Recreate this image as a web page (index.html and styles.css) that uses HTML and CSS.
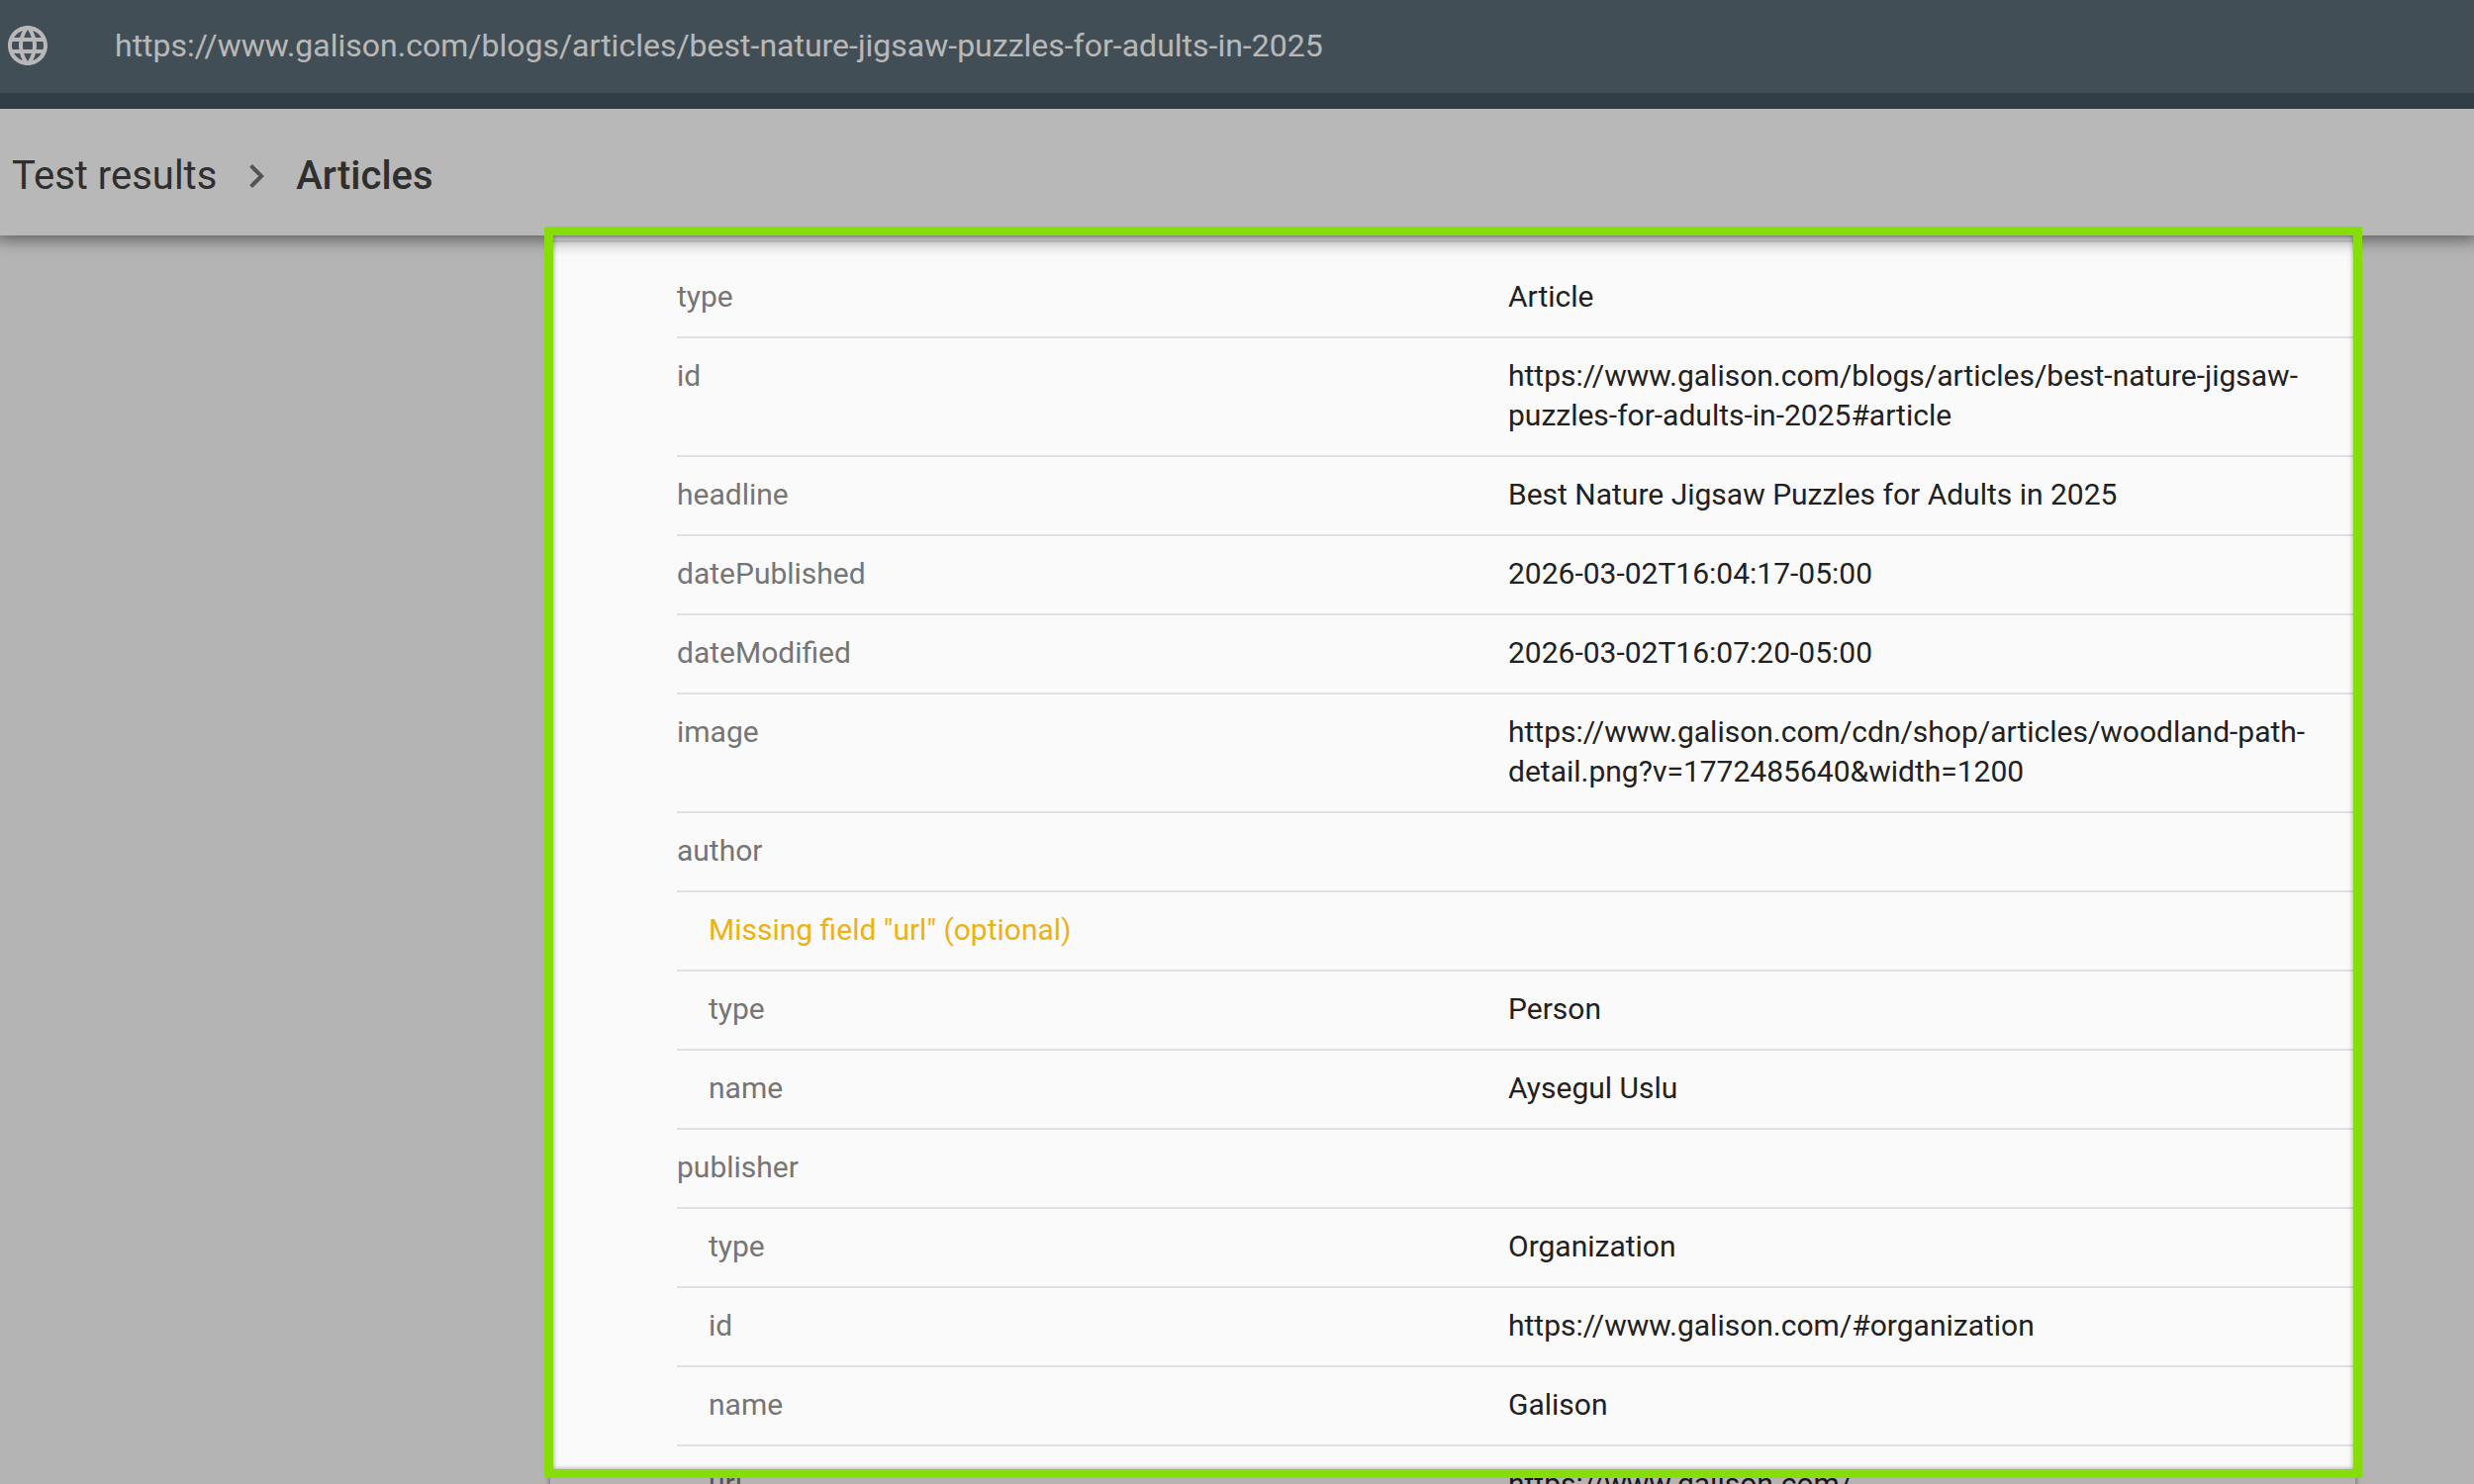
FILE: index.html
```html
<!DOCTYPE html>
<html lang="en">
<head>
  <meta charset="UTF-8" />
  <meta name="viewport" content="width=device-width, initial-scale=1.0" />
  <title>Test results - Articles</title>
  <link rel="stylesheet" href="styles.css">
</head>
<body>
  <header class="topbar">
    <form class="url-form">
      <svg class="icon" viewBox="0 0 24 24" aria-hidden="true"><path d="M11.99 2C6.47 2 2 6.48 2 12s4.47 10 9.99 10C17.52 22 22 17.52 22 12S17.52 2 11.99 2zm6.93 6h-2.95c-.32-1.25-.78-2.45-1.38-3.56 1.84.63 3.37 1.91 4.33 3.56zM12 4.04c.83 1.2 1.48 2.53 1.91 3.96h-3.82c.43-1.43 1.08-2.76 1.91-3.96zM4.26 14C4.1 13.36 4 12.69 4 12s.1-1.36.26-2h3.38c-.08.66-.14 1.32-.14 2s.06 1.34.14 2H4.26zm.82 2h2.95c.32 1.25.78 2.45 1.38 3.56-1.84-.63-3.37-1.9-4.33-3.56zm2.95-8H5.08c.96-1.66 2.49-2.93 4.33-3.56C8.81 5.55 8.35 6.75 8.03 8zM12 19.96c-.83-1.2-1.48-2.53-1.91-3.96h3.82c-.43 1.43-1.08 2.76-1.91 3.96zM14.34 14H9.66c-.09-.66-.16-1.32-.16-2s.07-1.35.16-2h4.68c.09.65.16 1.32.16 2s-.07 1.34-.16 2zm.25 5.56c.6-1.11 1.06-2.31 1.38-3.56h2.95c-.96 1.65-2.49 2.93-4.33 3.56zM16.36 14c.08-.66.14-1.32.14-2s-.06-1.34-.14-2h3.38c.16.64.26 1.31.26 2s-.1 1.36-.26 2h-3.38z"/></svg>
      <input class="url-input" type="text" aria-label="URL" value="https://www.galison.com/blogs/articles/best-nature-jigsaw-puzzles-for-adults-in-2025">
    </form>
  </header>

  <nav class="breadcrumb">
    <a href="#results">Test results</a>
    <svg class="icon chevron" viewBox="0 0 24 24" aria-hidden="true"><path d="M10 6L8.59 7.41 13.17 12l-4.58 4.59L10 18l6-6z"/></svg>
    <strong>Articles</strong>
  </nav>

  <main id="results">
    <div class="card">
      <div class="card-body">
        <table class="fields">
          <tr><th>type</th><td>Article</td></tr>
          <tr><th>id</th><td>https://www.galison.com/blogs/articles/best-nature-jigsaw-<wbr>puzzles-for-adults-in-2025#article</td></tr>
          <tr><th>headline</th><td>Best Nature Jigsaw Puzzles for Adults in 2025</td></tr>
          <tr><th>datePublished</th><td>2026-03-02T16:04:17-05:00</td></tr>
          <tr><th>dateModified</th><td>2026-03-02T16:07:20-05:00</td></tr>
          <tr><th>image</th><td>https://www.galison.com/cdn/shop/articles/woodland-path-<wbr>detail.png?v=1772485640&amp;width=1200</td></tr>
          <tr><th>author</th><td></td></tr>
          <tr class="nested warning"><th>Missing field "url" (optional)</th><td></td></tr>
          <tr class="nested"><th>type</th><td>Person</td></tr>
          <tr class="nested"><th>name</th><td>Aysegul Uslu</td></tr>
          <tr><th>publisher</th><td></td></tr>
          <tr class="nested"><th>type</th><td>Organization</td></tr>
          <tr class="nested"><th>id</th><td>https://www.galison.com/#organization</td></tr>
          <tr class="nested"><th>name</th><td>Galison</td></tr>
          <tr class="nested"><th>url</th><td>https://www.galison.com/</td></tr>
        </table>
      </div>
    </div>
  </main>

  <!-- highlight frame, its shadow dims everything around it -->
  <div class="spotlight"></div>
</body>
</html>
```

FILE: styles.css
```css
* { box-sizing: border-box; }
body {
  margin: 0;
  height: 100vh;
  position: relative;
  overflow: hidden;
  font-family: Roboto, sans-serif;
  background: #fafafa;
  color: #212121;
}
.icon {
  width: 48px;
  height: 48px;
  flex: none;
  fill: currentColor;
}

.topbar {
  position: relative;
  z-index: 2;
  background: #435660;
  padding-bottom: 16px;
}
.url-form {
  display: flex;
  align-items: center;
  gap: 64px;
  padding: 22px 4px 24px;
  background: #5b6d77;
  color: #fff;
}
.url-input {
  flex: 1;
  height: 48px;
  padding: 0;
  border: none;
  outline: none;
  background: none;
  color: #fff;
  font: 32px Roboto, sans-serif;
}

.breadcrumb {
  position: relative;
  z-index: 1;
  display: flex;
  align-items: center;
  gap: 16px;
  height: 128px;
  padding: 8px 12px 0;
  background: #fff;
  box-shadow: 0 0 16px 4px rgba(0,0,0,0.5);
  font-size: 40px;
  line-height: 48px;
}
.breadcrumb a { color: #424242; text-decoration: none; }
.breadcrumb strong { font-weight: 500; color: #424242; }
.chevron { color: #757575; }

.card {
  margin: 0 120px 0 556px;
  padding-top: 5px;
  background: #fafafa;
  box-shadow: 0 0 6px rgba(0,0,0,0.5);
}
.card-body {
  padding: 17px 0 0 128px;
  border-top: 2px solid #e0e0e0;
}
.fields {
  width: 100%;
  table-layout: fixed;
  border-collapse: separate;
  border-spacing: 0;
  font-size: 30px;
  line-height: 40px;
}
.fields th,
.fields td {
  padding: 18px 0 20px;
  border-bottom: 2px solid #e0e0e0;
  font-weight: 400;
  text-align: left;
  vertical-align: top;
  height: 80px;
}
.fields th { width: 840px; color: #757575; }
.fields td { padding-right: 24px; }
.fields .nested th { padding-left: 32px; }
.fields .warning th { color: #edb211; }

.spotlight {
  position: absolute;
  z-index: 3;
  top: 229px;
  left: 550px;
  right: 113px;
  bottom: 6px;
  border: 9px solid #87dd0a;
  box-shadow: 0 0 0 2500px rgba(0,0,0,0.277), inset 0 0 5px rgba(0,0,0,0.4);
  pointer-events: none;
}
```
